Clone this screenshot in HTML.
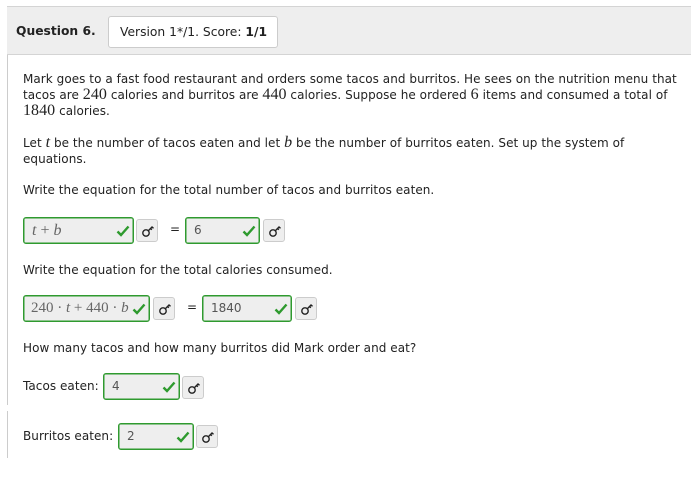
<!DOCTYPE html>
<html><head><meta charset="utf-8"><style>
*{margin:0;padding:0;box-sizing:border-box}
body{width:695px;height:477px;background:#fff;font-family:"DejaVu Sans","Liberation Sans",sans-serif;font-size:12px;color:#222;position:relative;overflow:hidden}
.a{position:absolute;white-space:nowrap}
.t{font-size:12px;letter-spacing:0.05px}
.hdr{position:absolute;left:7px;top:6px;width:684px;height:49px;background:#eee;border-top:1px solid #d4d4d4;border-bottom:1px solid #d4d4d4}
.ver{position:absolute;left:108px;top:16px;width:170px;height:32px;background:#fff;border:1px solid #ccc;border-radius:3px;font-size:12.3px;line-height:30px;padding-left:11px}
.m{font-family:"Liberation Serif",serif;font-size:16px}
.mi{font-family:"Liberation Serif",serif;font-style:italic;font-size:16px}
.box{position:absolute;border:1px solid #2f9a2f;box-shadow:0 0 0 0.5px #2f9a2f inset;border-radius:3px;background:#eee;height:27px;line-height:25px;padding-left:8px;color:#555}
.box svg{position:absolute;right:3px;top:7px}
.key{position:absolute;width:22px;height:23px;border:1px solid #ccc;border-radius:3px;background:#eee}
.key svg{position:absolute;left:4px;top:4px}
.line{position:absolute;left:7px;width:1px;background:#ccc}
</style></head><body>
<svg width="0" height="0" style="position:absolute"><defs>
<symbol id="ck" viewBox="0 0 14 12"><path d="M1.5 6.5 L5 10 L12.5 1.5" stroke="#2e9a2e" stroke-width="2.4" fill="none"/></symbol>
<symbol id="ky" viewBox="0 0 14 14"><circle cx="5" cy="9" r="3.2" stroke="#222" stroke-width="1.4" fill="none"/><path d="M7.3 6.7 L11.5 2.5 M9.5 4.5 L10.8 5.8 M11 3 L12.5 4.3" stroke="#222" stroke-width="1.4" fill="none"/></symbol>
</defs></svg>
<div class="hdr"></div>
<div class="a" style="left:16px;top:24px;font-weight:bold;font-size:12.3px">Question 6.</div>
<div class="ver">Version 1*/1. Score: <b>1/1</b></div>
<div class="line" style="top:55px;height:350px"></div>
<div class="line" style="top:411px;height:47px"></div>
<div class="a t" style="left:23px;top:71px;line-height:16px">Mark goes to a fast food restaurant and orders some tacos and burritos. He sees on the nutrition menu that<br>tacos are <span class="m">240</span> calories and burritos are <span class="m">440</span> calories. Suppose he ordered <span class="m">6</span> items and consumed a total of<br><span class="m">1840</span> calories.</div>
<div class="a t" style="left:23px;top:135px;line-height:16px">Let <span class="mi">t</span> be the number of tacos eaten and let <span class="mi">b</span> be the number of burritos eaten. Set up the system of<br>equations.</div>
<div class="a t" style="left:23px;top:183px">Write the equation for the total number of tacos and burritos eaten.</div>
<div class="box" style="left:23px;top:217px;width:111px"><span class="mi" style="color:#666">t</span><span class="m" style="color:#666"> + </span><span class="mi" style="color:#666">b</span><svg width="14" height="12"><use href="#ck"/></svg></div>
<div class="key" style="left:136px;top:219px"><svg width="14" height="14"><use href="#ky"/></svg></div>
<div class="a" style="left:170px;top:222px">=</div>
<div class="box" style="left:185px;top:217px;width:75px">6<svg width="14" height="12"><use href="#ck"/></svg></div>
<div class="key" style="left:263px;top:219px"><svg width="14" height="14"><use href="#ky"/></svg></div>
<div class="a t" style="left:23px;top:263px">Write the equation for the total calories consumed.</div>
<div class="box" style="left:23px;top:295px;width:127px;padding-left:7px"><span class="m" style="color:#666;font-size:15px">240 · <i>t</i> + 440 · <i>b</i></span><svg width="14" height="12"><use href="#ck"/></svg></div>
<div class="key" style="left:153px;top:297px"><svg width="14" height="14"><use href="#ky"/></svg></div>
<div class="a" style="left:187px;top:300px">=</div>
<div class="box" style="left:202px;top:295px;width:90px">1840<svg width="14" height="12"><use href="#ck"/></svg></div>
<div class="key" style="left:295px;top:297px"><svg width="14" height="14"><use href="#ky"/></svg></div>
<div class="a t" style="left:23px;top:341px">How many tacos and how many burritos did Mark order and eat?</div>
<div class="a t" style="left:23px;top:379px">Tacos eaten:</div>
<div class="box" style="left:103px;top:373px;width:77px">4<svg width="14" height="12"><use href="#ck"/></svg></div>
<div class="key" style="left:182px;top:376px"><svg width="14" height="14"><use href="#ky"/></svg></div>
<div class="a t" style="left:23px;top:429px">Burritos eaten:</div>
<div class="box" style="left:118px;top:423px;width:76px">2<svg width="14" height="12"><use href="#ck"/></svg></div>
<div class="key" style="left:196px;top:425px"><svg width="14" height="14"><use href="#ky"/></svg></div>
</body></html>
